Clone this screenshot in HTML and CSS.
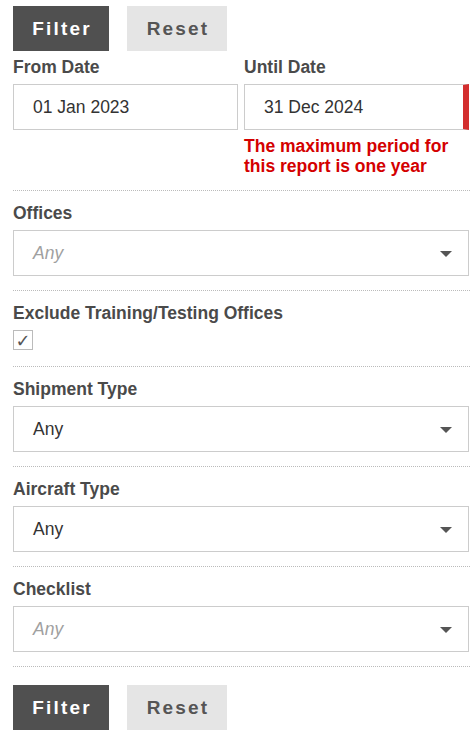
FILE: index.html
```html
<!DOCTYPE html>
<html>
<head>
<meta charset="utf-8">
<link rel="stylesheet" href="styles.css">
</head>
<body>
<div class="page">
  <div class="actions top">
    <button class="btn btn-primary">Filter</button>
    <button class="btn btn-secondary">Reset</button>
  </div>
  <div class="dates">
    <div class="field">
      <div class="label">From Date</div>
      <div class="input">01 Jan 2023</div>
    </div>
    <div class="field">
      <div class="label">Until Date</div>
      <div class="input input-error">31 Dec 2024</div>
      <div class="error">The maximum period for this report is one year</div>
    </div>
  </div>
  <div class="section">
    <div class="label">Offices</div>
    <div class="input select placeholder"><span>Any</span><span class="caret"></span></div>
  </div>
  <div class="section section-check">
    <div class="label">Exclude Training/Testing Offices</div>
    <div class="checkbox">&#10003;</div>
  </div>
  <div class="section">
    <div class="label">Shipment Type</div>
    <div class="input select"><span>Any</span><span class="caret"></span></div>
  </div>
  <div class="section">
    <div class="label">Aircraft Type</div>
    <div class="input select"><span>Any</span><span class="caret"></span></div>
  </div>
  <div class="section">
    <div class="label">Checklist</div>
    <div class="input select placeholder"><span>Any</span><span class="caret"></span></div>
  </div>
  <div class="divider"></div>
  <div class="actions bottom">
    <button class="btn btn-primary">Filter</button>
    <button class="btn btn-secondary">Reset</button>
  </div>
</div>
</body>
</html>
```
FILE: styles.css
```css
html, body {
  margin: 0;
  padding: 0;
  background: #fff;
}
body {
  font-family: "Liberation Sans", Arial, sans-serif;
  color: #333;
}
.page {
  padding: 6px 4px 0 13px;
  width: 456px;
}
.actions {
  display: flex;
  gap: 18px;
}
.actions.bottom {
  margin-top: 18px;
}
.btn {
  height: 45px;
  border: none;
  margin: 0;
  font-family: "Liberation Sans", Arial, sans-serif;
  font-weight: bold;
  font-size: 19px;
  letter-spacing: 2.2px;
  padding: 0 17px 0 19px;
  cursor: pointer;
}
.btn-primary {
  background: #505050;
  color: #fff;
  width: 96px;
}
.btn-secondary {
  background: #e5e5e5;
  color: #555;
  width: 100px;
}
.label {
  font-size: 17.5px;
  line-height: 20px;
  font-weight: bold;
  color: #4a4a4a;
  height: 20px;
  white-space: nowrap;
}
.dates {
  display: flex;
  gap: 6px;
  padding-top: 6px;
  padding-bottom: 14px;
}
.field {
  width: 225px;
}
.input {
  margin-top: 7px;
  height: 44px;
  border: 1px solid #ccc;
  box-sizing: content-box;
  font-size: 17.5px;
  line-height: 44px;
  padding: 0 0 0 19px;
  color: #333;
}
.field .input {
  width: 204px;
}
.input-error {
  border-right: 6px solid #d32f2f;
  width: 199px !important;
}
.error {
  margin-top: 6px;
  color: #d40000;
  font-weight: bold;
  font-size: 17.5px;
  line-height: 20px;
}
.section {
  border-top: 1px dotted #bbb;
  padding: 12px 0 14px 0;
  margin-right: -1px;
}
.select {
  display: flex;
  justify-content: space-between;
  align-items: center;
  padding-right: 16px;
  margin-right: 1px;
}
.placeholder span:first-child {
  font-style: italic;
  color: #a0a0a0;
}
.caret {
  width: 0;
  height: 0;
  border-left: 6.5px solid transparent;
  border-right: 6.5px solid transparent;
  border-top: 6.5px solid #555;
  margin-top: 2px;
}
.section-check {
  padding-bottom: 16px;
}
.checkbox {
  margin-top: 7px;
  width: 18px;
  height: 18px;
  border: 1px solid #bbb;
  font-size: 18px;
  line-height: 19px;
  text-align: center;
  color: #555;
  font-family: "DejaVu Sans", sans-serif;
}
.divider {
  border-top: 1px dotted #bbb;
  margin-right: -1px;
}
```
